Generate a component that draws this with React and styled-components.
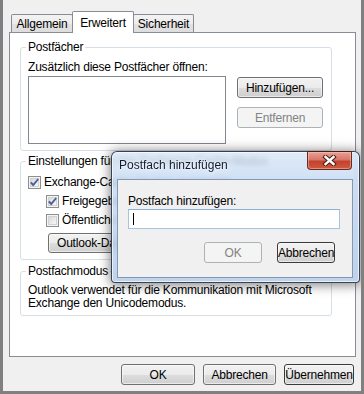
import React from "react";
import styled, { createGlobalStyle, css } from "styled-components";

const Global = createGlobalStyle`
  html, body { margin: 0; padding: 0; background: #f0f0f0; }
  body {
    font-family: "Liberation Sans", Arial, sans-serif;
    font-size: 12px;
    color: #000;
    letter-spacing: -0.2px;
  }
  * { box-sizing: border-box; }
`;

const Window = styled.div`
  position: relative;
  width: 364px;
  height: 394px;
  background: #f0f0f0;
  border: 3px solid #808080;
  border-top: none;
  padding: 11px 5px 0 6px;
  display: flex;
  flex-direction: column;
  overflow: hidden;
`;

const TabStrip = styled.div`
  display: flex;
  align-items: flex-end;
  height: 21px;
  padding-left: 2px;
  position: relative;
  z-index: 2;
`;

const Tab = styled.div`
  width: ${(p) => p.$w}px;
  height: ${(p) => (p.$active ? 22 : 18)}px;
  margin-left: ${(p) => (p.$first ? 0 : -1)}px;
  margin-bottom: ${(p) => (p.$active ? -1 : 0)}px;
  border: 1px solid #898c95;
  border-bottom: none;
  border-radius: 2px 2px 0 0;
  display: flex;
  align-items: center;
  justify-content: center;
  white-space: nowrap;
  position: relative;
  z-index: ${(p) => (p.$active ? 2 : 1)};
  background: ${(p) =>
    p.$active
      ? "#ffffff"
      : "linear-gradient(#f3f3f3 0%, #ececec 50%, #e2e2e2 51%, #dedede 100%)"};
`;

const Panel = styled.div`
  height: 325px;
  border: 1px solid #898c95;
  background: #fff;
  padding: 7px 0 0 10px;
  display: flex;
  flex-direction: column;
`;

const Group = styled.fieldset`
  width: 312px;
  margin: ${(p) => p.$mt || 0}px 0 0 0;
  padding: 0 8px ${(p) => p.$pb || 6}px 7px;
  border: 1px solid #d5dfe5;
  border-radius: 3px;
  min-width: 0;
`;

const Legend = styled.legend`
  padding: 0 2px;
  margin-left: -2px;
  line-height: 14px;
  white-space: nowrap;
`;

const Label = styled.div`
  line-height: 14px;
  margin-top: ${(p) => p.$mt || 0}px;
  white-space: nowrap;
`;

const ListRow = styled.div`
  display: flex;
  align-items: flex-start;
  margin-top: 2px;
`;

const ListBox = styled.div`
  width: 198px;
  height: 68px;
  border: 1px solid #828790;
  background: #fff;
`;

const ButtonColumn = styled.div`
  display: flex;
  flex-direction: column;
  gap: 9px;
  margin-left: 11px;
  margin-top: 1px;
`;

const Button = styled.div`
  width: ${(p) => (p.$w ? `${p.$w}px` : "auto")};
  height: ${(p) => p.$h || 21}px;
  padding: ${(p) => (p.$w ? "0" : "0 9px 0 8px")};
  border-radius: 3px;
  display: flex;
  align-items: center;
  justify-content: center;
  white-space: nowrap;
  flex-shrink: 0;
  border: 1px solid #707070;
  background: linear-gradient(#f2f2f2 0%, #ebebeb 50%, #dddddd 51%, #cfcfcf 100%);
  box-shadow: inset 0 0 0 1px rgba(255, 255, 255, 0.55);
  ${(p) =>
    p.$variant === "default" &&
    css`
      border-color: #3a3a3a;
    `}
  ${(p) =>
    p.$variant === "disabled" &&
    css`
      border-color: #adb2b5;
      background: #f4f4f4;
      box-shadow: none;
      color: #838383;
    `}
`;

const CheckRows = styled.div`
  display: flex;
  flex-direction: column;
  gap: 1px;
  margin-top: 5px;
`;

const CheckRow = styled.div`
  height: 18px;
  display: flex;
  align-items: center;
  gap: 3px;
  padding-left: ${(p) => p.$indent || 0}px;
  white-space: nowrap;
`;

const Indented = styled.div`
  display: flex;
  padding-left: 20px;
  margin-top: 4px;
`;

const Paragraph = styled.div`
  line-height: 13px;
  margin-top: 6px;
  white-space: nowrap;
`;

const Footer = styled.div`
  display: flex;
  justify-content: flex-end;
  gap: 8px;
  margin-top: 7px;
  margin-right: 2px;
`;

/* ---------- overlay dialog ---------- */

const Dialog = styled.div`
  position: absolute;
  left: 108px;
  top: 151px;
  width: 249px;
  height: 132px;
  z-index: 10;
  border: 1px solid rgba(38, 48, 66, 0.9);
  border-radius: 6px 6px 4px 4px;
  padding: 0 6px 4px 5px;
  display: flex;
  flex-direction: column;
  background: linear-gradient(
    180deg,
    rgba(216, 230, 247, 0.8) 0%,
    rgba(200, 219, 242, 0.86) 22%,
    rgba(187, 208, 236, 0.92) 100%
  );
  backdrop-filter: blur(2.5px);
  box-shadow: 0 1px 12px 1px rgba(0, 0, 0, 0.5),
    inset 0 0 0 1px rgba(255, 255, 255, 0.65);
`;

const TitleBar = styled.div`
  height: 27px;
  display: flex;
  align-items: flex-start;
`;

const Title = styled.div`
  margin-top: 6px;
  padding-left: 2px;
  line-height: 14px;
  letter-spacing: 0;
  color: #101a30;
  white-space: nowrap;
  text-shadow: 0 0 6px rgba(255, 255, 255, 0.95), 0 0 2px rgba(255, 255, 255, 0.9);
`;

const CloseButton = styled.div`
  margin-left: auto;
  margin-top: -1px;
  margin-right: 1px;
  width: 45px;
  height: 19px;
  border: 1px solid #6b2a20;
  border-top-color: #4a1d16;
  border-radius: 0 0 4px 4px;
  display: flex;
  align-items: center;
  justify-content: center;
  background: linear-gradient(#e8a093 0%, #d8766a 45%, #c3422f 55%, #cf5a3e 100%);
  box-shadow: inset 0 0 0 1px rgba(255, 210, 200, 0.45);
`;

const Client = styled.div`
  flex: 1;
  border: 1px solid #8399b3;
  background: #f0f0f0;
  padding: 14px 12px 0 10px;
  display: flex;
  flex-direction: column;
`;

const TextField = styled.div`
  width: 212px;
  height: 20px;
  margin-top: 1px;
  border: 1px solid #a9c3de;
  border-top-color: #8fb0d2;
  background: #fff;
  display: flex;
  align-items: center;
  padding-left: 4px;
`;

const Caret = styled.span`
  width: 1px;
  height: 12px;
  background: #000;
`;

const DialogButtons = styled.div`
  display: flex;
  justify-content: flex-end;
  gap: 15px;
  margin-top: 13px;
  margin-right: 5px;
`;

const CheckBox = ({ checked }) => (
  <svg width="13" height="13" viewBox="0 0 13 13" style={{ flexShrink: 0 }}>
    <defs>
      <linearGradient id="cbfill" x1="0" y1="0" x2="1" y2="1">
        <stop offset="0" stopColor="#d6d6d6" />
        <stop offset="1" stopColor="#fafafa" />
      </linearGradient>
    </defs>
    <rect x="0.5" y="0.5" width="12" height="12" fill="#f4f4f4" stroke="#8e8f8f" />
    <rect x="2.5" y="2.5" width="8" height="8" fill="url(#cbfill)" stroke="#d2d2d2" />
    {checked && (
      <path
        d="M2.8 6.4 L5.2 9 L10.2 3"
        fill="none"
        stroke="#4b5f94"
        strokeWidth="1.9"
      />
    )}
  </svg>
);

const CloseGlyph = () => (
  <svg width="15" height="11" viewBox="0 0 15 11">
    <path d="M3.5 2 L11.5 9 M11.5 2 L3.5 9" stroke="#4a1e17" strokeWidth="4.4" strokeLinecap="square" />
    <path d="M3.5 2 L11.5 9 M11.5 2 L3.5 9" stroke="#ffffff" strokeWidth="2.4" strokeLinecap="square" />
  </svg>
);

export default function App() {
  return (
    <>
      <Global />
      <Window>
        <TabStrip>
          <Tab $w={62} $first>Allgemein</Tab>
          <Tab $w={62} $active>Erweitert</Tab>
          <Tab $w={61}>Sicherheit</Tab>
        </TabStrip>
        <Panel>
          <Group>
            <Legend>Postfächer</Legend>
            <Label $mt={6}>Zusätzlich diese Postfächer öffnen:</Label>
            <ListRow>
              <ListBox />
              <ButtonColumn>
                <Button $w={86}>Hinzufügen...</Button>
                <Button $w={86} $variant="disabled">Entfernen</Button>
              </ButtonColumn>
            </ListRow>
          </Group>

          <Group $mt={3}>
            <Legend>Einstellungen für den Exchange-Cache-Modus</Legend>
            <CheckRows>
              <CheckRow>
                <CheckBox checked />
                Exchange-Cache-Modus verwenden
              </CheckRow>
              <CheckRow $indent={18}>
                <CheckBox checked />
                Freigegebene Ordner herunterladen
              </CheckRow>
              <CheckRow $indent={18}>
                <CheckBox />
                Öffentliche Ordner-Favoriten herunterladen
              </CheckRow>
            </CheckRows>
            <Indented>
              <Button $h={20}>Outlook-Datendatei-Einstellungen...</Button>
            </Indented>
          </Group>

          <Group $mt={4} $pb={5}>
            <Legend>Postfachmodus</Legend>
            <Paragraph>
              Outlook verwendet für die Kommunikation mit Microsoft
              <br />
              Exchange den Unicodemodus.
            </Paragraph>
          </Group>
        </Panel>
        <Footer>
          <Button $w={74}>OK</Button>
          <Button $w={73}>Abbrechen</Button>
          <Button $w={70} $variant="default">Übernehmen</Button>
        </Footer>

        <Dialog>
          <TitleBar>
            <Title>Postfach hinzufügen</Title>
            <CloseButton>
              <CloseGlyph />
            </CloseButton>
          </TitleBar>
          <Client>
            <Label>Postfach hinzufügen:</Label>
            <TextField>
              <Caret />
            </TextField>
            <DialogButtons>
              <Button $w={58} $variant="disabled">OK</Button>
              <Button $w={58} $variant="default">Abbrechen</Button>
            </DialogButtons>
          </Client>
        </Dialog>
      </Window>
    </>
  );
}
